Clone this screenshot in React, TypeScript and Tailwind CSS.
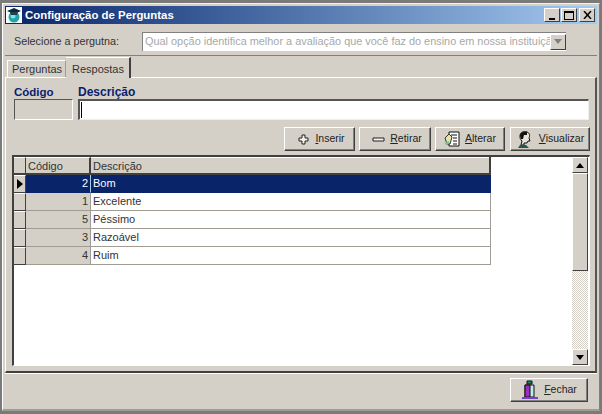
import type { ReactNode } from "react";

const rows = [
  { code: 2, text: "Bom" },
  { code: 1, text: "Excelente" },
  { code: 5, text: "Péssimo" },
  { code: 3, text: "Razoável" },
  { code: 4, text: "Ruim" },
];

function WinButton({ width, label, hot, icon }: { width: string; label: string; hot: string; icon: ReactNode }) {
  return (
    <div
      className={`${width} h-[24px] flex items-center justify-center gap-[3px] bg-[#d4d0c8] border-t border-l border-t-white border-l-white border-b border-r border-b-[#404040] border-r-[#404040] shadow-[inset_-1px_-1px_0_#808080] text-[10.5px] text-[#222]`}
    >
      {icon}
      <span>
        <span className="underline">{hot}</span>
        {label}
      </span>
    </div>
  );
}

function TitleButton({ children }: { children: ReactNode }) {
  return (
    <div className="w-[16px] h-[14px] flex items-center justify-center bg-[#d4d0c8] border-t border-l border-t-white border-l-white border-b border-r border-b-[#404040] border-r-[#404040]">
      {children}
    </div>
  );
}

function ScrollButton({ up }: { up?: boolean }) {
  return (
    <div className="w-[16px] h-[16px] shrink-0 flex items-center justify-center bg-[#d4d0c8] border-t border-l border-t-white border-l-white border-b border-r border-b-[#404040] border-r-[#404040]">
      <svg width="8" height="5" viewBox="0 0 8 5">
        <path d={up ? "M4 0 L8 5 L0 5 Z" : "M0 0 L8 0 L4 5 Z"} fill="#000" />
      </svg>
    </div>
  );
}

export default function App() {
  return (
    <div className="w-[602px] h-[414px] overflow-hidden bg-[#d4d0c8] border-t-[3px] border-x-2 border-b-[3px] border-[#7a7a78] font-['Liberation_Sans',sans-serif]">
      <div className="h-full border-t border-l border-t-[#f4f2ea] border-l-white border-r border-r-[#808080] border-b-2 border-b-[#a09c94] pt-[2px] pl-[2px] pr-[2px] flex flex-col">
        {/* barra de titulo */}
        <div className="h-[18px] shrink-0 flex items-center bg-gradient-to-r from-[#0a246a] to-[#a6caf0] pl-[1px] pr-[2px]">
          <svg width="16" height="16" viewBox="0 0 16 16" className="shrink-0 bg-white">
            <circle cx="8" cy="10" r="5.5" fill="#1fa5a5" />
            <circle cx="7" cy="9" r="2.5" fill="#7fe3e8" />
            <path d="M1 4 L8 1 L15 4 L8 7 Z" fill="#0d2a3a" />
            <path d="M4 5 L12 5 L11 8 L5 8 Z" fill="#22404f" />
          </svg>
          <span className="ml-[3px] pt-[1px] text-[11.4px] font-bold text-white">Configuração de Perguntas</span>
          <div className="ml-auto flex gap-[1px] items-center">
            <TitleButton>
              <div className="w-[6px] h-[2px] bg-black mt-[7px] mr-[1px]" />
            </TitleButton>
            <TitleButton>
              <div className="w-[10px] h-[9px] border border-black border-t-2" />
            </TitleButton>
            <div className="ml-[1px]">
              <TitleButton>
                <svg width="9" height="8" viewBox="0 0 9 8">
                  <path d="M1 0 L8 8 M8 0 L1 8" stroke="#000" strokeWidth="1.5" />
                </svg>
              </TitleButton>
            </div>
          </div>
        </div>

        {/* seletor de pergunta */}
        <div className="h-[32px] shrink-0 flex items-center border-b border-b-[#808080] pl-[9px] pt-[3px]">
          <span className="w-[128px] text-[10.8px] text-[#333]">Selecione a pergutna:</span>
          <div className="w-[424px] h-[19px] flex items-center bg-white border-t border-l border-t-[#808080] border-l-[#808080] pl-[2px] overflow-hidden">
            <span className="flex-1 text-[10.9px] text-[#a8a8a8] whitespace-nowrap overflow-hidden">
              Qual opção identifica melhor a avaliação que você faz do ensino em nossa instituição?
            </span>
            <div className="w-[16px] h-[16px] shrink-0 flex items-center justify-center bg-[#d4d0c8] border-t border-l border-t-white border-l-white border-b border-r border-b-[#404040] border-r-[#404040]">
              <svg width="8" height="5" viewBox="0 0 8 5">
                <path d="M0 0 L8 0 L4 5 Z" fill="#808080" />
              </svg>
            </div>
          </div>
        </div>

        {/* abas */}
        <div className="h-[21px] shrink-0 flex items-end pl-[2px] mt-[1px]">
          <div className="w-[59px] h-[18px] pl-[1px] flex items-center justify-center border-t border-l border-t-white border-l-white border-r border-r-[#a09c94] text-[11px] text-[#333]">
            Perguntas
          </div>
          <div className="w-[65px] h-[21px] pl-[1px] flex items-start pt-[3px] justify-center bg-[#d4d0c8] border-t border-t-white border-r-2 border-r-[#404040] text-[11px] text-[#333] relative z-10">
            Respostas
          </div>
        </div>

        {/* painel */}
        <div className="h-[296px] shrink-0 -mt-[1px] border-t border-l border-t-white border-l-white border-r-2 border-r-[#555] border-b-2 border-b-[#404040] flex flex-col pl-[8px] pr-[5px]">
          <div className="flex gap-[5px] mt-[7px] mr-[1px] shrink-0">
            <div className="w-[59px]">
              <div className="text-[11.5px] font-bold text-[#0a1f6e] leading-[14px]">Código</div>
              <div className="h-[21px] bg-[#d4d0c8] border-t border-l border-t-[#555] border-l-[#555] border-b border-r border-b-white border-r-white" />
            </div>
            <div className="flex-1">
              <div className="text-[12px] font-bold text-[#0a1f6e] leading-[14px]">Descrição</div>
              <div className="h-[21px] bg-white border-t-2 border-l-2 border-t-[#555] border-l-[#555] border-b border-r border-b-[#eee] border-r-[#eee] pl-[1px] py-[1px]">
                <div className="w-[1px] h-full bg-black" />
              </div>
            </div>
          </div>

          <div className="flex justify-end gap-[4px] mt-[7px] shrink-0">
            <WinButton
              width="w-[71px]"
              hot="I"
              label="nserir"
              icon={
                <svg width="11" height="11" viewBox="0 0 11 11" className="ml-[4px] mr-[3px]">
                  <path d="M4 1 H7 V4 H10 V7 H7 V10 H4 V7 H1 V4 H4 Z" fill="#f4f2ea" stroke="#222" />
                </svg>
              }
            />
            <WinButton
              width="w-[72px]"
              hot="R"
              label="etirar"
              icon={
                <svg width="13" height="5" viewBox="0 0 13 5" className="ml-[4px] mr-[2px]">
                  <path d="M1 1 H12 V4 H1 Z" fill="#f4f2ea" stroke="#222" />
                </svg>
              }
            />
            <WinButton
              width="w-[70px]"
              hot="A"
              label="lterar"
              icon={
                <svg width="18" height="18" viewBox="0 0 18 18">
                  <path d="M5 2 H15 V16 H5 Z" fill="#fff" stroke="#111" />
                  <path d="M7 5 H13 M9 8 H13 M9 11 H13 M9 14 H13" stroke="#111" />
                  <path d="M1 8 L5 4 L8 7 L6 14 H3 Z" fill="#e6e6a0" stroke="#333" />
                  <path d="M1 14 L5 12" stroke="#6fc9a0" strokeWidth="2" />
                </svg>
              }
            />
            <div className="ml-[1px]">
              <WinButton
                width="w-[80px]"
                hot="V"
                label="isualizar"
                icon={
                  <svg width="18" height="19" viewBox="0 0 18 19" className="mr-[2px]">
                    <path d="M4 6 C4 2 8 1 11 2 C14 3 14 6 13 8 L14 11 L12 11 L11 13 L8 13 L8 15 L5 15 L6 11 C4 9 4 8 4 6 Z" fill="#e8e4d8" stroke="#111" />
                    <path d="M4 6 C4 2 8 1 11 2 L11 5 L8 5 L7 9 L5 9 Z" fill="#111" />
                    <path d="M2 18 L4 15 L10 15 L13 18 Z" fill="#1d5a50" />
                  </svg>
                }
              />
            </div>
          </div>

          {/* grade */}
          <div className="h-[211px] mt-[4px] -ml-[2px] shrink-0 flex bg-white border-t-2 border-l-2 border-t-[#404040] border-l-[#404040] border-b border-r border-b-white border-r-white">
            <div className="flex-1 min-w-0">
              <div className="w-[477px] h-[18px] flex bg-[#d4d0c8] text-[11px] text-[#333] border-b-2 border-b-[#404040] border-r-2 border-r-[#404040]">
                <div className="w-[12px] border-r border-r-[#404040] border-t border-t-white" />
                <div className="w-[65px] pl-[2px] border-r-2 border-r-[#404040] border-t border-t-white leading-[16px]">Código</div>
                <div className="flex-1 pl-[2px] border-t border-t-white leading-[16px]">Descrição</div>
              </div>
              {rows.map((row, index) => {
                const selected = index === 0;
                return (
                  <div key={row.code} className="w-[477px] h-[18px] flex text-[11px] leading-[17px]">
                    <div className="w-[12px] flex items-center justify-center bg-[#d4d0c8] border-t border-t-white border-b border-b-[#404040] border-r border-r-[#404040]">
                      {selected && (
                        <svg width="6" height="10" viewBox="0 0 6 10">
                          <path d="M0 0 L6 5 L0 10 Z" fill="#000" />
                        </svg>
                      )}
                    </div>
                    <div
                      className={`w-[65px] text-right pr-[2px] border-r border-b ${
                        selected
                          ? "bg-[#0a246a] text-white border-r-[#a6caf0] border-b-[#0a246a]"
                          : "bg-[#d4d0c8] text-[#333] border-r-[#a09c94] border-b-[#a09c94]"
                      }`}
                    >
                      {row.code}
                    </div>
                    <div
                      className={`flex-1 pl-[2px] border-b border-r ${
                        selected
                          ? "bg-[#0a246a] text-white border-b-[#0a246a] border-r-[#0a246a]"
                          : "bg-white text-[#333] border-b-[#a09c94] border-r-[#a09c94]"
                      }`}
                    >
                      {row.text}
                    </div>
                  </div>
                );
              })}
            </div>
            <div className="w-[16px] mr-[1px] flex flex-col shrink-0">
              <ScrollButton up />
              <div className="h-[98px] shrink-0 bg-[#d4d0c8] border-t border-l border-t-white border-l-white border-b border-r border-b-[#404040] border-r-[#404040]" />
              <div className="flex-1 bg-[repeating-conic-gradient(#d4d0c8_0_25%,#ffffff_0_50%)] bg-[length:2px_2px]" />
              <ScrollButton />
            </div>
          </div>
        </div>

        {/* rodape */}
        <div className="flex-1 flex justify-end items-start pt-[4px] pr-[9px] border-t border-t-white">
          <WinButton
            width="w-[78px]"
            hot="F"
            label="echar"
            icon={
              <svg width="18" height="20" viewBox="0 0 18 20" className="mr-[2px]">
                <path d="M6 1 H11 V4 H6 Z" fill="#1a8a6a" stroke="#111" />
                <path d="M4 5 H13 V17 H4 Z" fill="#bfeaf0" stroke="#111" />
                <path d="M4 5 H9 V17 H4 Z" fill="#9a2fc0" stroke="#111" />
                <path d="M1 18 H17" stroke="#7a3fd0" strokeWidth="2" />
              </svg>
            }
          />
        </div>
      </div>
    </div>
  );
}
